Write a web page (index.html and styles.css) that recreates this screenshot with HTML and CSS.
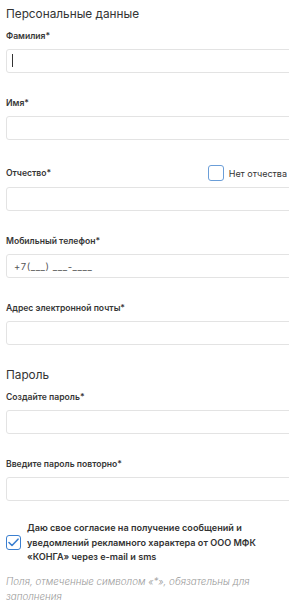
FILE: index.html
```html
<!DOCTYPE html>
<html lang="ru">
<head>
    <meta charset="UTF-8">
    <meta name="viewport" content="width=device-width, initial-scale=1.0">
    <title>Регистрация</title>
    <link rel="stylesheet" href="styles.css">
</head>
<body>

    <form class="reg-form">
        <!-- Personal data -->
        <h2 class="section-title">Персональные данные</h2>

        <div class="field">
            <label class="field-label" for="last-name">Фамилия*</label>
            <div class="input-wrap">
                <input type="text" id="last-name" class="text-input">
                <span class="caret"></span>
            </div>
        </div>

        <div class="field">
            <label class="field-label" for="first-name">Имя*</label>
            <input type="text" id="first-name" class="text-input">
        </div>

        <div class="field">
            <div class="label-row">
                <label class="field-label" for="middle-name">Отчество*</label>
                <label class="no-middle">
                    <input type="checkbox" class="box-input">
                    <span class="box"></span>
                    Нет отчества
                </label>
            </div>
            <input type="text" id="middle-name" class="text-input">
        </div>

        <div class="field">
            <label class="field-label" for="phone">Мобильный телефон*</label>
            <input type="text" id="phone" class="text-input phone" value="+7(___) ___-____">
        </div>

        <div class="field">
            <label class="field-label" for="email">Адрес электронной почты*</label>
            <input type="text" id="email" class="text-input">
        </div>

        <!-- Password -->
        <h2 class="section-title second">Пароль</h2>

        <div class="field">
            <label class="field-label" for="pass">Создайте пароль*</label>
            <input type="password" id="pass" class="text-input">
        </div>

        <div class="field">
            <label class="field-label" for="pass2">Введите пароль повторно*</label>
            <input type="password" id="pass2" class="text-input">
        </div>

        <label class="consent">
            <input type="checkbox" class="box-input" checked>
            <span class="box checked">
                <svg width="11" height="9" viewBox="0 0 11 9"><path d="M1 4.5 L4 7.5 L10 1.2" fill="none" stroke="#3b7fd0" stroke-width="1.6" stroke-linecap="round" stroke-linejoin="round"/></svg>
            </span>
            <span class="consent-text">Даю свое согласие на получение сообщений и уведомлений рекламного характера от ООО МФК «КОНГА» через e-mail и sms</span>
        </label>

        <p class="note">Поля, отмеченные символом «*», обязательны для заполнения</p>
    </form>

</body>
</html>
```

FILE: styles.css
```css
html, body {
    margin: 0;
    padding: 0;
}

body {
    font-family: Inter, "DejaVu Sans", sans-serif;
    color: #333;
    background-color: #fff;
    overflow-x: hidden;
}

/* Form is wider than the window, the right side gets cut */
.reg-form {
    width: 300px;
    padding: 4px 0 0 6px;
}

.section-title {
    margin: 0;
    font-size: 11.8px;
    font-weight: 400;
    line-height: 20px;
    color: #333;
}

.section-title.second {
    margin-top: 20px;
}

.field {
    margin-top: 7px;
}

.field + .field {
    margin-top: 25px;
}

.section-title.second + .field {
    margin-top: 7px;
}

.field-label {
    display: block;
    font-size: 8.6px;
    font-weight: 600;
    line-height: 10px;
    color: #363636;
    margin-bottom: 8px;
}

.label-row {
    display: flex;
    justify-content: space-between;
    align-items: center;
    height: 16px;
    margin-bottom: 6px;
}

.label-row .field-label {
    margin-bottom: 0;
}

.no-middle {
    display: flex;
    align-items: center;
    gap: 5px;
    font-size: 9px;
    color: #333;
    margin-right: 19px;
}

.input-wrap {
    position: relative;
}

.text-input {
    display: block;
    box-sizing: border-box;
    width: 100%;
    height: 24px;
    padding: 0 7px;
    border: 1px solid #e3e3e3;
    border-radius: 3px;
    font-family: inherit;
    font-size: 9.5px;
    color: #555;
    background: #fff;
    outline: none;
}

.text-input.phone {
    letter-spacing: 0.6px;
}

/* fake text cursor in the focused field */
.caret {
    position: absolute;
    left: 6px;
    top: 5px;
    width: 1px;
    height: 13px;
    background: #333;
}

.box-input {
    display: none;
}

.box {
    display: inline-flex;
    align-items: center;
    justify-content: center;
    box-sizing: border-box;
    width: 16px;
    height: 16px;
    border: 1.5px solid #6b9ed8;
    border-radius: 3px;
    flex-shrink: 0;
}

.box.checked {
    width: 15px;
    height: 15px;
    border-color: #3b7fd0;
}

.consent {
    display: flex;
    align-items: center;
    gap: 6px;
    margin-top: 20px;
}

.consent-text {
    font-size: 9.1px;
    font-weight: 600;
    line-height: 14.5px;
    color: #333;
    width: 240px;
}

.note {
    margin: 9px 0 0;
    font-size: 9.8px;
    font-style: italic;
    font-weight: 300;
    line-height: 15px;
    color: #9a9a9a;
    width: 262px;
}
```
